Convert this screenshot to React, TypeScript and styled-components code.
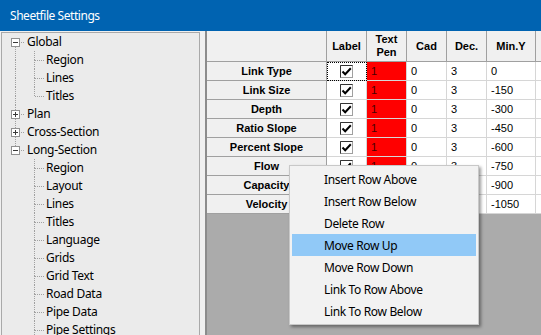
import styled, { createGlobalStyle } from 'styled-components';

const GlobalStyle = createGlobalStyle`
  html, body {
    margin: 0;
    padding: 0;
  }
  body {
    background: #f0f0f0;
    font-family: 'Noto Sans', 'Open Sans', sans-serif;
    overflow: hidden;
  }
`;

type TreeNode = { label: string; children?: string[] };

const tree: TreeNode[] = [
  { label: 'Global', children: ['Region', 'Lines', 'Titles'] },
  { label: 'Plan' },
  { label: 'Cross-Section' },
  {
    label: 'Long-Section',
    children: [
      'Region',
      'Layout',
      'Lines',
      'Titles',
      'Language',
      'Grids',
      'Grid Text',
      'Road Data',
      'Pipe Data',
      'Pipe Settings',
      'Pipe Labels',
      'Pit Data',
    ],
  },
];

const columns = [
  { key: 'label', title: ['Label'], width: 40 },
  { key: 'pen', title: ['Text', 'Pen'], width: 40 },
  { key: 'cad', title: ['Cad'], width: 40 },
  { key: 'dec', title: ['Dec.'], width: 40 },
  { key: 'miny', title: ['Min.Y'], width: 49 },
  { key: 'more', title: [''], width: 60 },
];

const rows = [
  { name: 'Link Type', minY: '0' },
  { name: 'Link Size', minY: '-150' },
  { name: 'Depth', minY: '-300' },
  { name: 'Ratio Slope', minY: '-450' },
  { name: 'Percent Slope', minY: '-600' },
  { name: 'Flow', minY: '-750' },
  { name: 'Capacity', minY: '-900' },
  { name: 'Velocity', minY: '-1050' },
];

const menuItems = [
  'Insert Row Above',
  'Insert Row Below',
  'Delete Row',
  'Move Row Up',
  'Move Row Down',
  'Link To Row Above',
  'Link To Row Below',
];

// tree connector cell: dotted lines and the +/- box
interface GuideProps {
  top?: boolean;
  bottom?: boolean;
  stub?: boolean;
  box?: 'plus' | 'minus';
}

const Guide = ({ top, bottom, stub, box }: GuideProps) => (
  <GuideSvg width='19' height='18' viewBox='0 0 19 18'>
    <g stroke='#a0a0a0' strokeWidth='1' strokeDasharray='1 1'>
      {top && <line x1='9.5' y1='0' x2='9.5' y2={box ? 5 : 9} />}
      {bottom && <line x1='9.5' y1={box ? 14 : 9} x2='9.5' y2='18' />}
      {stub && <line x1={box ? 15 : 10} y1='9.5' x2='19' y2='9.5' />}
    </g>
    {box && (
      <g>
        <rect x='5.5' y='5.5' width='8' height='8' fill='#fff' stroke='#919191' />
        <line x1='7' y1='9.5' x2='12' y2='9.5' stroke='#3a3a3a' />
        {box === 'plus' && <line x1='9.5' y1='7' x2='9.5' y2='12' stroke='#3a3a3a' />}
      </g>
    )}
  </GuideSvg>
);

const CheckBox = () => (
  <svg width='13' height='13' viewBox='0 0 13 13'>
    <rect x='0.5' y='0.5' width='12' height='12' fill='#fff' stroke='#a0a0a0' />
    <path d='M0.5 12.5 V0.5 H12.5' fill='none' stroke='#333' />
    <path d='M2.5 6.5 L5.2 9.3 L10.8 3.3' fill='none' stroke='#000' strokeWidth='2' />
  </svg>
);

export default function App() {
  return (
    <Window>
      <GlobalStyle />
      <TitleBar>Sheetfile Settings</TitleBar>
      <Body>
        {/* Tree */}
        <TreePanel>
          {tree.map((node, i) => {
            const first = i === 0;
            const last = i === tree.length - 1;
            return (
              <div key={node.label}>
                <TreeRow>
                  <Guide top={!first} bottom={!last} stub box={node.children ? 'minus' : 'plus'} />
                  <TreeLabel>{node.label}</TreeLabel>
                </TreeRow>
                {node.children?.map((child, j) => (
                  <TreeRow key={child + j}>
                    <Guide top={!last} bottom={!last} />
                    <Guide top bottom={j < node.children!.length - 1} stub />
                    <TreeLabel>{child}</TreeLabel>
                  </TreeRow>
                ))}
              </div>
            );
          })}
        </TreePanel>

        {/* Grid */}
        <GridPanel>
          <HeaderRow>
            <HeaderCell $w={120} />
            {columns.map((col) => (
              <HeaderCell key={col.key} $w={col.width}>
                {col.title.map((t) => (
                  <span key={t}>{t}</span>
                ))}
              </HeaderCell>
            ))}
          </HeaderRow>
          {rows.map((row, i) => (
            <GridRow key={row.name}>
              <RowHeaderCell $w={120}>{row.name}</RowHeaderCell>
              <CheckCell $w={40} $focused={i === 0}>
                <CheckBox />
              </CheckCell>
              <DataCell $w={40} $bg='#ff0000' $color='#4a0000'>
                1
              </DataCell>
              <DataCell $w={40}>0</DataCell>
              <DataCell $w={40}>3</DataCell>
              <DataCell $w={49}>{row.minY}</DataCell>
              <DataCell $w={60} />
            </GridRow>
          ))}
        </GridPanel>
      </Body>

      {/* Context menu */}
      <ContextMenu>
        {menuItems.map((item) => (
          <MenuItem key={item} $active={item === 'Move Row Up'}>
            {item}
          </MenuItem>
        ))}
      </ContextMenu>
    </Window>
  );
}

const Window = styled.div`
  position: relative;
  width: 541px;
  height: 335px;
  overflow: hidden;
  display: flex;
  flex-direction: column;
  background: #f0f0f0;
`;

const TitleBar = styled.div`
  flex: none;
  height: 31px;
  display: flex;
  align-items: center;
  padding-left: 10px;
  background: #0063b1;
  color: #fff;
  font-size: 12px;
  letter-spacing: -0.45px;
`;

const Body = styled.div`
  flex: 1;
  display: flex;
  min-height: 0;
`;

// ------------------------------- Tree ------------------------------- //
const TreePanel = styled.div`
  flex: none;
  width: 193px;
  margin: 1px 0 0 1px;
  padding-left: 4px;
  border: 1px solid #a9a9a9;
  border-bottom: none;
  background: #ebebeb;
  overflow: hidden;
`;

const TreeRow = styled.div`
  display: flex;
  align-items: center;
  height: 18px;
`;

const GuideSvg = styled.svg`
  flex: none;
  display: block;
`;

const TreeLabel = styled.span`
  padding-left: 2px;
  font-size: 12px;
  letter-spacing: -0.3px;
  line-height: 18px;
  color: #000;
  white-space: nowrap;
`;

// ------------------------------- Grid ------------------------------- //
const GridPanel = styled.div`
  flex: 1;
  display: flex;
  flex-direction: column;
  margin-left: 5px;
  border-left: 2px solid #8c8c8c;
  background: #ababab;
  overflow: hidden;
`;

const GridRow = styled.div`
  flex: none;
  display: flex;
  height: 19px;
`;

const HeaderRow = styled(GridRow)`
  height: 31px;
`;

const Cell = styled.div<{ $w: number }>`
  flex: none;
  box-sizing: border-box;
  width: ${({ $w }) => $w}px;
  display: flex;
  align-items: center;
  font-family: 'Liberation Sans', Arial, sans-serif;
  font-size: 11px;
  color: #000;
`;

const HeaderCell = styled(Cell)`
  flex-direction: column;
  justify-content: center;
  background: #f0f0f0;
  border-right: 1px solid #a0a0a0;
  border-bottom: 1px solid #a0a0a0;
  font-weight: bold;
  line-height: 13px;
`;

const RowHeaderCell = styled(Cell)`
  justify-content: center;
  background: #f0f0f0;
  border-right: 1px solid #a0a0a0;
  border-bottom: 1px solid #a0a0a0;
  font-weight: bold;
`;

const DataCell = styled(Cell)<{ $bg?: string; $color?: string }>`
  padding-left: 4px;
  background: ${({ $bg }) => $bg || '#fff'};
  color: ${({ $color }) => $color || '#000'};
  border-right: 1px solid #d6d6d6;
  border-bottom: 1px solid #d6d6d6;
`;

const CheckCell = styled(Cell)<{ $focused?: boolean }>`
  justify-content: center;
  background: #fff;
  border-right: 1px solid #d6d6d6;
  border-bottom: 1px solid #d6d6d6;
  outline: ${({ $focused }) => ($focused ? '1px dotted #000' : 'none')};
  outline-offset: -1px;
`;

// ------------------------------- Menu ------------------------------- //
const ContextMenu = styled.div`
  position: absolute;
  left: 289px;
  top: 165px;
  width: 184px;
  padding: 2px;
  border: 1px solid #c8c8c8;
  background: #f2f2f2;
  box-shadow: 2px 2px 3px rgba(0, 0, 0, 0.4);
`;

const MenuItem = styled.div<{ $active?: boolean }>`
  height: 22px;
  display: flex;
  align-items: center;
  padding-left: 32px;
  background: ${({ $active }) => ($active ? '#91c9f7' : 'transparent')};
  font-size: 12px;
  letter-spacing: -0.35px;
  color: #000;
  white-space: nowrap;
`;
